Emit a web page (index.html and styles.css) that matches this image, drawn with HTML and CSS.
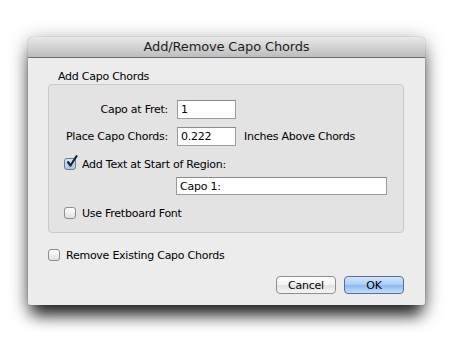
FILE: index.html
```html
<!DOCTYPE html>
<html lang="en">
<head>
    <meta charset="UTF-8">
    <title>Add/Remove Capo Chords</title>
    <link rel="stylesheet" href="styles.css">
</head>
<body>
    <div class="window">
        <div class="titlebar">Add/Remove Capo Chords</div>
        <div class="content">
            <div class="group-label">Add Capo Chords</div>
            <div class="group">
                <div class="row">
                    <label class="field-label">Capo at Fret:</label>
                    <input class="field" type="text" value="1">
                </div>
                <div class="row row-2">
                    <label class="field-label">Place Capo Chords:</label>
                    <input class="field" type="text" value="0.222">
                    <span class="suffix">Inches Above Chords</span>
                </div>
                <div class="check-row row-3">
                    <span class="check checked">
                        <svg width="14" height="14" viewBox="0 0 14 14"><path d="M2.5 6.5 L5.5 10.5 L12 0.5" fill="none" stroke="#1c2433" stroke-width="2.2" stroke-linejoin="round"/></svg>
                    </span>
                    <span>Add Text at Start of Region:</span>
                </div>
                <div class="row row-4">
                    <input class="field wide" type="text" value="Capo 1:">
                </div>
                <div class="check-row row-5">
                    <span class="check"></span>
                    <span>Use Fretboard Font</span>
                </div>
            </div>
            <div class="check-row remove-row">
                <span class="check"></span>
                <span>Remove Existing Capo Chords</span>
            </div>
            <div class="button-group">
                <button class="btn">Cancel</button>
                <button class="btn btn-default">OK</button>
            </div>
        </div>
    </div>
</body>
</html>
```

FILE: styles.css
```css
html, body {
    height: 100%;
}
body {
    margin: 0;
    padding-top: 37px;
    box-sizing: border-box;
    background: #fff;
    font-family: "DejaVu Sans", sans-serif;
    font-size: 11px;
    letter-spacing: -0.25px;
    color: #000;
}
.window {
    margin-left: 28px;
    width: 397px;
    height: 268px;
    background: #ececec;
    border-radius: 5px 5px 2px 2px;
    box-shadow: 0 14px 16px -4px rgba(0, 0, 0, 0.8), 0 4px 20px rgba(0, 0, 0, 0.4), 0 0 1px rgba(0, 0, 0, 0.5);
    overflow: hidden;
}
.titlebar {
    height: 20px;
    line-height: 20px;
    text-align: center;
    font-size: 13px;
    letter-spacing: -0.15px;
    color: #1e1e1e;
    background: linear-gradient(#e9e9e9, #bdbdbd);
    border-bottom: 1px solid #6e6e6e;
}
.content {
    padding: 12px 21px 0 20px;
}
.group-label {
    line-height: 14px;
    padding-left: 10px;
}
.group {
    background: #e3e3e3;
    border: 1px solid #c9c9c9;
    border-radius: 4px;
    padding-top: 15px;
    box-sizing: border-box;
    height: 149px;
}
.row {
    display: flex;
    align-items: center;
    height: 19px;
}
.field-label {
    width: 119px;
    margin-right: 9px;
    text-align: right;
}
.field {
    width: 59px;
    height: 19px;
    box-sizing: border-box;
    border: 1px solid #9b9b9b;
    border-top-color: #8a8a8a;
    background: #fff;
    font-family: inherit;
    font-size: 11px;
    letter-spacing: -0.25px;
    padding: 0 3px;
    margin: 0;
    outline: none;
}
.suffix {
    margin-left: 8px;
}
.row-2 {
    margin-top: 8px;
}
.check-row {
    display: flex;
    align-items: center;
    height: 14px;
    padding-left: 15px;
}
.row-3 {
    margin-top: 11px;
}
.row-4 {
    margin-top: 6px;
    height: 18px;
    padding-left: 127px;
}
.field.wide {
    width: 211px;
    height: 18px;
}
.row-5 {
    margin-top: 11px;
}
.check {
    position: relative;
    width: 12px;
    height: 12px;
    box-sizing: border-box;
    border: 1px solid #8c8c8c;
    border-radius: 3px;
    background: linear-gradient(#ffffff, #e0e0e0);
    margin-right: 6px;
}
.check.checked {
    border-color: #6b7b94;
    background: linear-gradient(#dbe8f8, #a9c4e6);
}
.check svg {
    position: absolute;
    left: 0;
    top: -4px;
}
.remove-row {
    margin-top: 15px;
    padding-left: 0;
}
.button-group {
    display: flex;
    justify-content: flex-end;
    gap: 8px;
    margin-top: 14px;
}
.btn {
    width: 60px;
    height: 18px;
    padding: 0;
    border: 1px solid #8e8e8e;
    border-radius: 4px;
    background: linear-gradient(#ffffff, #f2f2f2 50%, #e2e2e2 51%, #f4f4f4);
    font-family: inherit;
    font-size: 11px;
    letter-spacing: -0.25px;
    color: #000;
}
.btn-default {
    border-color: #5a6f95;
    background: linear-gradient(#d5e6fb, #a9ccf5 50%, #8ab8f0 51%, #c4defa);
}
```
